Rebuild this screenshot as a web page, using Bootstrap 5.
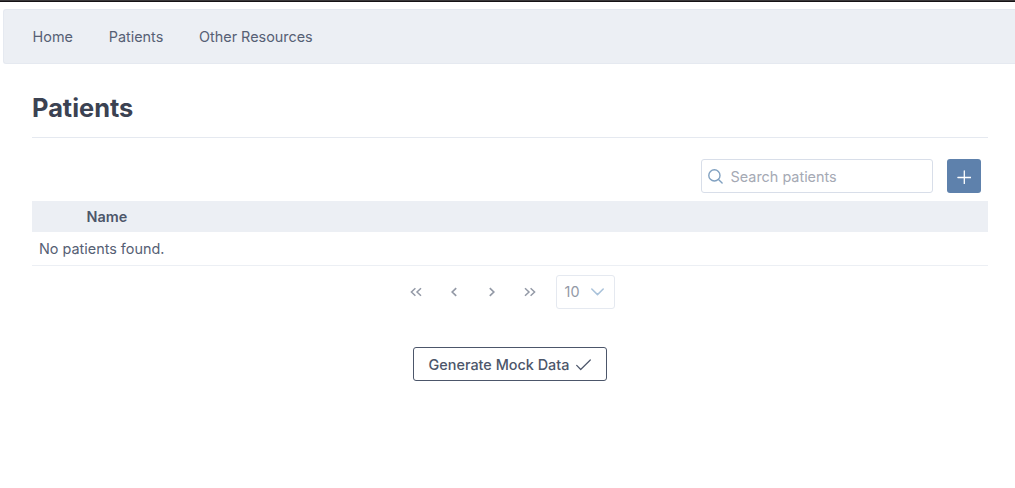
<!DOCTYPE html>
<html lang="en">
<head>
<meta charset="utf-8">
<meta name="viewport" content="width=device-width, initial-scale=1">
<title>Patients</title>
<link href="https://cdn.jsdelivr.net/npm/bootstrap@5.3.0/dist/css/bootstrap.min.css" rel="stylesheet">
<style>
body{font-family:Inter,"Liberation Sans",sans-serif;font-size:14.4px;line-height:18px;color:#4c566a;overflow:hidden}
svg{display:block;fill:none;stroke:currentColor;flex:none}
.window-edge{height:2px;background:#151215;border-top:1px solid #3a383a}
.topnav{height:55px;margin:7px 0 0 3px;padding:0 0 0 28.6px;background:#eceff4;border:1px solid #e5e9f0;border-right:0;border-radius:3px 0 0 3px;gap:35.8px}
.topnav .nav-link{color:#566074;padding:0}
.page{margin:0 27px 0 32px}
.page-title{font-size:25.4px;font-weight:700;line-height:30px;color:#3b4252;margin:0;padding:29px 0 14px;border-bottom:1px solid #e5e9f0}
.tools{padding:21px 7px 8px 0;gap:14px}
.search-box{width:232px;height:34px;border:1px solid #d8dee9;border-radius:3px;padding:1px 6px 0;gap:7.6px;color:#81a1c1}
.search-box input{min-width:0;padding:1px 0 0;font-size:14.4px;line-height:18px;color:#4c566a}
.search-box input::placeholder{color:#a5a9b4;opacity:1}
.add-btn{width:34px;height:34px;background:#5e81ac;color:#fff;border-radius:3px;padding:1px 0 0}
.patients-table{margin:0;line-height:18px;color:#4c566a}
.patients-table th{height:31px;background:#eceff4;padding:0 0 0 6.6px;border:0;font-weight:600;vertical-align:middle;color:#4c566a}
.patients-table td{height:33px;padding:1px 7px 0;border-bottom:1px solid #eceff4;vertical-align:middle;color:#566074}
.pager{margin:9px 6px 0 0;color:#9399a6}
.pager button{width:34px;height:34px;color:inherit;padding:0;margin-right:3.8px}
.page-size{width:59px;height:34px;border:1px solid #e5e9f0;border-radius:3px;margin-left:5px;padding:0 10px 0 8px}
.page-size svg{color:#a9c2da}
.mock-btn{width:194px;height:34px;border:1px solid #4c566a;border-radius:3px;color:#4c566a;font-size:14.4px;line-height:18px;font-weight:500;margin-top:38px;padding:2px 0 0;gap:7px}
</style>
</head>
<body>
<div class="window-edge"></div>
<nav class="topnav nav align-items-center flex-nowrap">
<a class="nav-link" href="#">Home</a><a class="nav-link" href="#">Patients</a><a class="nav-link" href="#">Other Resources</a>
</nav>
<main class="page">
<h1 class="page-title">Patients</h1>
<div class="tools d-flex justify-content-end">
<label class="search-box d-flex align-items-center">
<svg width="15" height="15" viewBox="0 0 15 15" stroke-width="1.4" stroke-linecap="round"><circle cx="6.4" cy="6.4" r="5.6"/><path d="M10.5 10.5l3.6 3.6"/></svg>
<input class="form-control border-0 bg-transparent shadow-none" type="text" placeholder="Search patients">
</label>
<button class="add-btn btn border-0 d-flex align-items-center justify-content-center" aria-label="Add patient"><svg width="14" height="14" viewBox="0 0 14 14" stroke-width="1.3" stroke-linecap="round"><path d="M7.3 .8v13M.9 7.5h13"/></svg></button>
</div>
<table class="patients-table table table-borderless">
<colgroup><col style="width:48px"><col></colgroup>
<thead><tr><th></th><th>Name</th></tr></thead>
<tbody><tr><td colspan="2">No patients found.</td></tr></tbody>
</table>
<div class="pager d-flex align-items-center justify-content-center">
<button class="btn border-0 d-flex align-items-center justify-content-center" aria-label="First"><svg width="12" height="10" viewBox="0 0 12 10" stroke-width="1.5"><path d="M5.4 1.2L1.4 5l4 3.8M11 1.2L7 5l4 3.8"/></svg></button>
<button class="btn border-0 d-flex align-items-center justify-content-center" aria-label="Previous"><svg width="6" height="10" viewBox="0 0 6 10" stroke-width="1.7"><path d="M5.2 1.2L1.2 5l4 3.8"/></svg></button>
<button class="btn border-0 d-flex align-items-center justify-content-center" aria-label="Next"><svg width="6" height="10" viewBox="0 0 6 10" stroke-width="1.7"><path d="M.8 1.2l4 3.8-4 3.8"/></svg></button>
<button class="btn border-0 d-flex align-items-center justify-content-center" aria-label="Last"><svg width="12" height="10" viewBox="0 0 12 10" stroke-width="1.5"><path d="M1 1.2L5 5 1 8.8M6.6 1.2l4 3.8-4 3.8"/></svg></button>
<div class="page-size d-flex align-items-center justify-content-between"><span>10</span><svg width="13" height="8" viewBox="0 0 13 8" stroke-width="1.5" stroke-linecap="round" stroke-linejoin="round"><path d="M.8 1l5.7 5.6L12.2 1"/></svg></div>
</div>
<button class="mock-btn btn d-flex align-items-center justify-content-center mx-auto">Generate Mock Data<svg width="15" height="12" viewBox="0 0 15 12" stroke-width="1.2" stroke-linecap="round" stroke-linejoin="round"><path d="M.7 6.4l4 4.1L14.3 1"/></svg></button>
</main>
<script src="https://cdn.jsdelivr.net/npm/bootstrap@5.3.0/dist/js/bootstrap.bundle.min.js"></script>
</body>
</html>
